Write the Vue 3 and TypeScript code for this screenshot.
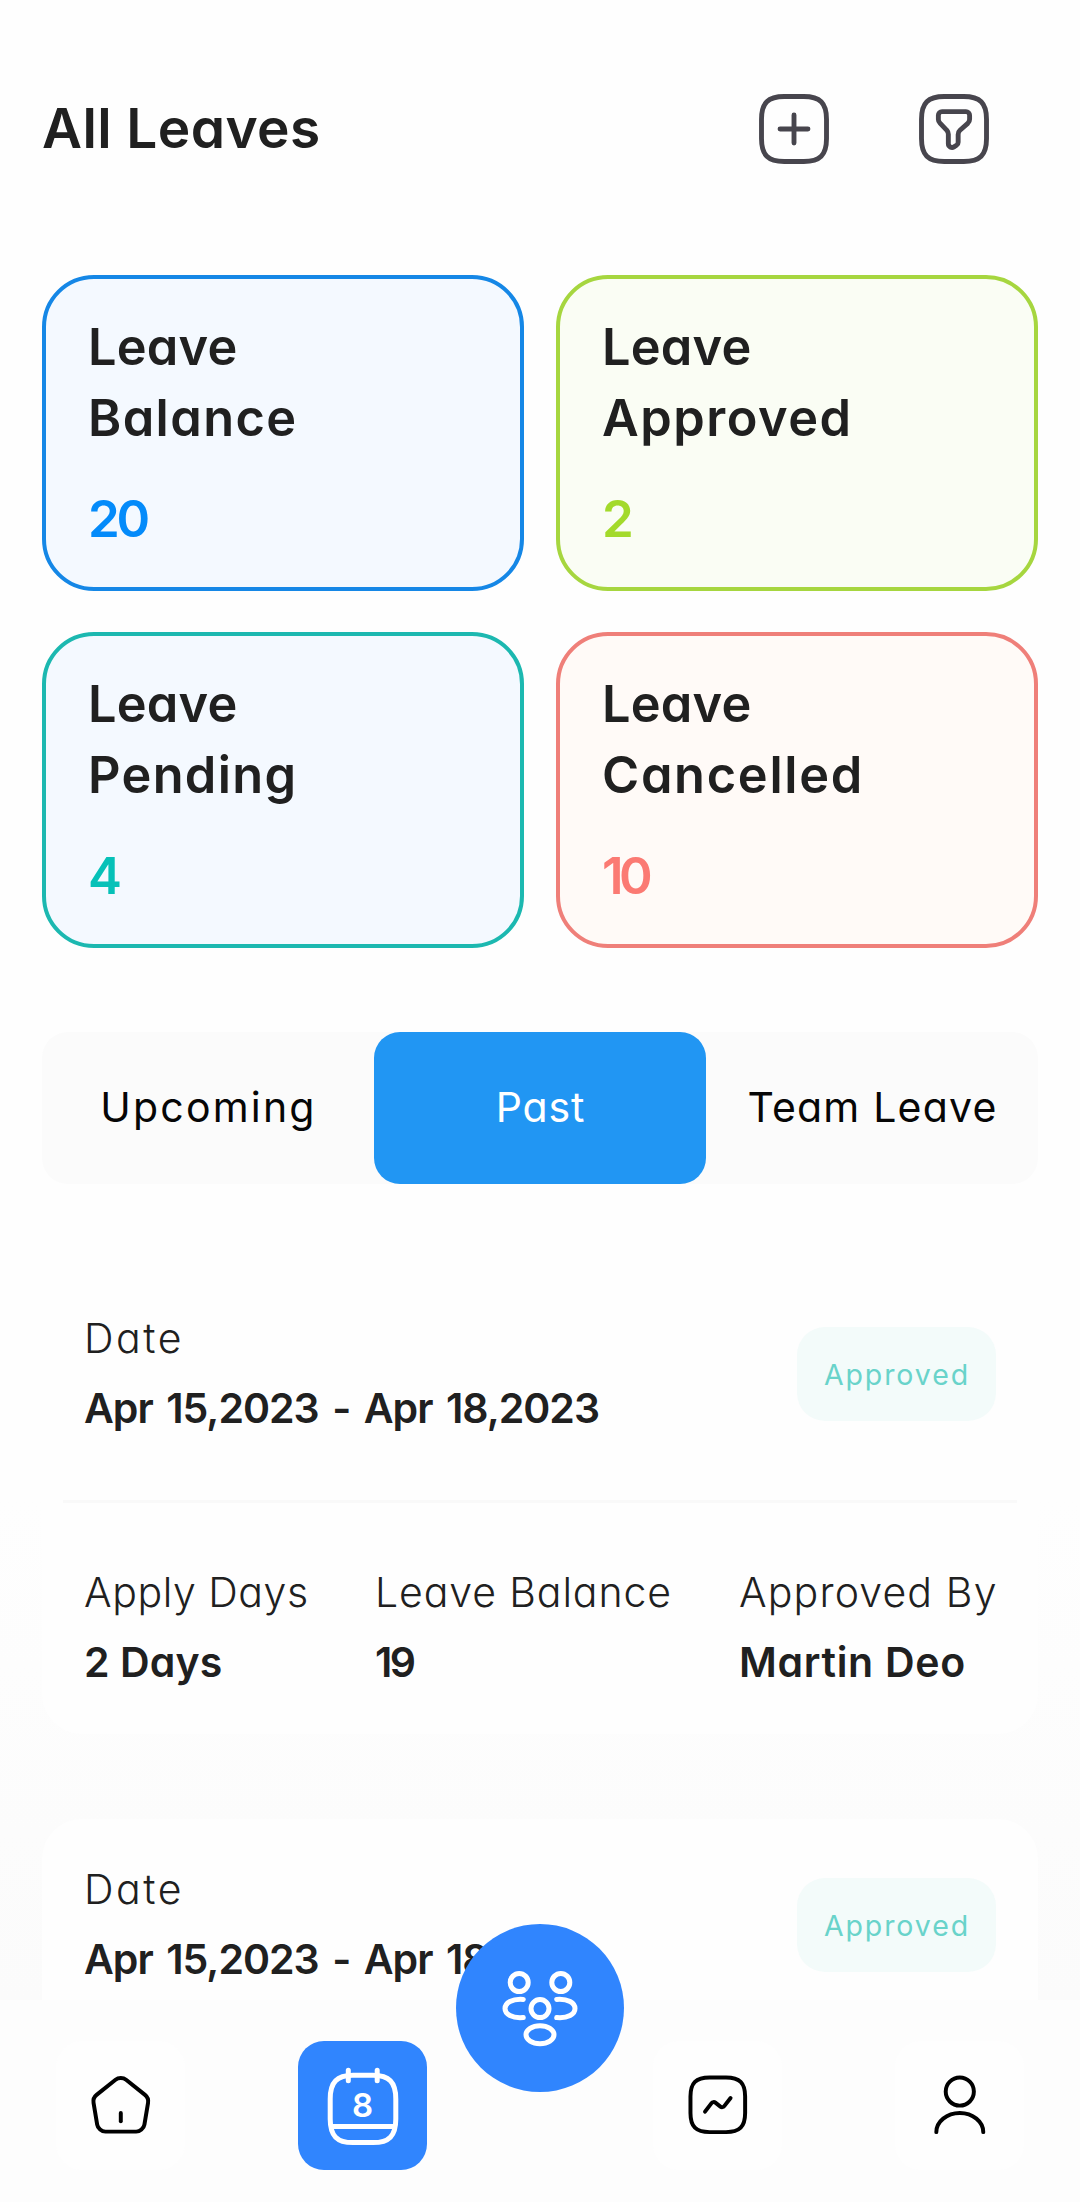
<script setup lang="ts">
interface Run { text: string; track: number }
interface Stat { tone: string; first: Run; second: Run; value: Run }
interface Fact { label: Run; value: Run }
interface Leave { id: number; range: string; status: string; facts: Fact[] }

const stats: Stat[] = [
  {
    tone: 'blue',
    first: { text: 'Leave', track: 0.2 },
    second: { text: 'Balance', track: 1.4 },
    value: { text: '20', track: -3.4 },
  },
  {
    tone: 'lime',
    first: { text: 'Leave', track: 0.2 },
    second: { text: 'Approved', track: 1.5 },
    value: { text: '2', track: 0 },
  },
  {
    tone: 'teal',
    first: { text: 'Leave', track: 0.2 },
    second: { text: 'Pending', track: 1.3 },
    value: { text: '4', track: 0 },
  },
  {
    tone: 'coral',
    first: { text: 'Leave', track: 0.2 },
    second: { text: 'Cancelled', track: 1.7 },
    value: { text: '10', track: -4.5 },
  },
]

const tabs: (Run & { active: boolean })[] = [
  { text: 'Upcoming', track: 2.2, active: false },
  { text: 'Past', track: 0.9, active: true },
  { text: 'Team Leave', track: 1.2, active: false },
]

const leaves: Leave[] = [
  {
    id: 1,
    range: 'Apr 15,2023 - Apr 18,2023',
    status: 'Approved',
    facts: [
      { label: { text: 'Apply Days', track: 0.55 }, value: { text: '2 Days', track: 0.1 } },
      { label: { text: 'Leave Balance', track: 0.9 }, value: { text: '19', track: -2.5 } },
      { label: { text: 'Approved By', track: 1.15 }, value: { text: 'Martin Deo', track: 0.7 } },
    ],
  },
  { id: 2, range: 'Apr 15,2023 - Apr 18,2023', status: 'Approved', facts: [] },
]

const spacing = (run: Run) => ({ letterSpacing: `${run.track}px` })
</script>

<template>
  <main class="screen">
    <div class="content">
      <header class="header">
        <h1>All Leaves</h1>
        <div class="actions">
          <button type="button" aria-label="Add leave">
            <svg viewBox="0 0 24 24" class="icon">
              <path d="M9 22h6c5 0 7-2 7-7V9c0-5-2-7-7-7H9C4 2 2 4 2 9v6c0 5 2 7 7 7z" />
              <path d="M7.700 12h8.600M12 16.300V7.700" />
            </svg>
          </button>
          <button type="button" aria-label="Filter">
            <svg viewBox="0 0 24 24" class="icon">
              <path d="M9 22h6c5 0 7-2 7-7V9c0-5-2-7-7-7H9C4 2 2 4 2 9v6c0 5 2 7 7 7z" />
              <path d="M8.32 6.64h7.36c.61 0 1.12.5 1.12 1.12v1.22c0 .45-.28 1-.56 1.28l-2.4 2.12c-.33.28-.56.84-.56 1.28v2.4c0 .33-.22.78-.5.95l-.79.5c-.73.45-1.73-.06-1.73-.95v-2.96c0-.39-.22-.89-.45-1.17l-2.12-2.23c-.28-.28-.5-.78-.5-1.12V7.8c0-.66.5-1.16 1.13-1.16z" />
            </svg>
          </button>
        </div>
      </header>

      <section class="stats">
        <article v-for="stat in stats" :key="stat.second.text" class="stat" :class="stat.tone">
          <h2>
            <span :style="spacing(stat.first)">{{ stat.first.text }}</span>
            <span :style="spacing(stat.second)">{{ stat.second.text }}</span>
          </h2>
          <strong :style="spacing(stat.value)">{{ stat.value.text }}</strong>
        </article>
      </section>

      <nav class="tabs">
        <button
          v-for="tab in tabs"
          :key="tab.text"
          type="button"
          :class="{ active: tab.active }"
          :style="spacing(tab)"
        >
          {{ tab.text }}
        </button>
      </nav>

      <section class="list">
        <article v-for="leave in leaves" :key="leave.id" class="leave">
          <div class="head">
            <div>
              <p class="label date">Date</p>
              <p class="value range">{{ leave.range }}</p>
            </div>
            <span class="badge">{{ leave.status }}</span>
          </div>
          <div v-if="leave.facts.length" class="facts">
            <div v-for="fact in leave.facts" :key="fact.label.text">
              <p class="label" :style="spacing(fact.label)">{{ fact.label.text }}</p>
              <p class="value" :style="spacing(fact.value)">{{ fact.value.text }}</p>
            </div>
          </div>
        </article>
      </section>
    </div>

    <nav class="bar">
      <div class="group">
        <a class="tile">
          <svg viewBox="0 0 24 24" class="glyph">
            <path d="M10.07 2.82 3.14 8.37c-.78.62-1.28 1.93-1.11 2.91l1.33 7.96c.24 1.42 1.6 2.57 3.04 2.57h11.2c1.43 0 2.8-1.16 3.04-2.57l1.33-7.96c.16-.98-.34-2.29-1.11-2.91l-6.93-5.54c-1.07-.86-2.8-.86-3.86-.01z" />
            <path d="M12 18v-3" />
          </svg>
        </a>
        <a class="tile selected">
          <svg viewBox="0 0 78 84" class="calendar">
            <path d="M29 11.3h20C65 11.3 71.8 18 71.8 35v20C71.8 72 65 78.6 49 78.6H29C13 78.6 6.2 72 6.2 55V35C6.2 18 13 11.3 29 11.3z" />
            <path d="M24.3 6.2v10.6M53.2 6.2v10.6" />
            <path d="M7.5 62.4h63" stroke-linecap="butt" />
            <text x="38.5" y="53.2" text-anchor="middle">8</text>
          </svg>
        </a>
      </div>
      <div class="group">
        <a class="tile">
          <svg viewBox="0 0 24 24" class="glyph">
            <path d="M9 22h6c5 0 7-2 7-7V9c0-5-2-7-7-7H9C4 2 2 4 2 9v6c0 5 2 7 7 7z" />
            <path d="m7.33 14.49 2.38-3.09c.34-.44.97-.52 1.41-.18l1.83 1.44c.44.34 1.07.26 1.41-.17l2.31-2.98" />
          </svg>
        </a>
        <a class="tile">
          <svg viewBox="0 0 24 24" class="glyph">
            <path d="M12 12.300a5.150 5.150 0 1 0 0-10.300 5.150 5.150 0 0 0 0 10.300z" />
            <path d="M20.59 22c0-3.87-3.85-7-8.59-7s-8.59 3.13-8.59 7" />
          </svg>
        </a>
      </div>
      <button type="button" class="fab" aria-label="Team">
        <svg viewBox="0 0 84 84">
          <circle cx="21.2" cy="16.5" r="9" />
          <circle cx="62.8" cy="16.5" r="9" />
          <circle cx="42" cy="42.6" r="9" />
          <ellipse cx="42" cy="68.8" rx="14" ry="9" />
          <path d="M25.3 33.4C14 32.500 7 37 7 42.6s7 10 18.300 9" />
          <path d="M58.700 33.4C70 32.500 77 37 77 42.6s-7 10-18.300 9" />
        </svg>
      </button>
    </nav>
  </main>
</template>

<style>
body {
  margin: 0;
}
</style>

<style scoped>
.screen {
  display: flex;
  flex-direction: column;
  width: 1080px;
  height: 2202px;
  overflow: hidden;
  color: #202020;
  font-family: Inter, 'Noto Sans', sans-serif;
  font-feature-settings: 'cv11';
}

button {
  display: flex;
  align-items: center;
  justify-content: center;
  margin: 0;
  padding: 0;
  border: 0;
  background: none;
  color: inherit;
  font: inherit;
  font-feature-settings: inherit;
}

h1,
h2,
p {
  margin: 0;
}

svg {
  display: block;
  fill: none;
  stroke: currentColor;
  stroke-linecap: round;
  stroke-linejoin: round;
}

.content {
  flex: 1;
  min-height: 0;
  overflow: hidden;
  box-sizing: border-box;
  padding: 60px 42px 0;
  background: linear-gradient(#fefefe 75%, #fbfbfb);
}

.header {
  display: flex;
  align-items: center;
  justify-content: space-between;
  height: 137px;
  padding-right: 45px;
}

h1 {
  padding-bottom: 2px;
  font-size: 55px;
  font-weight: 600;
  line-height: 70px;
  letter-spacing: 0.4px;
}

.actions {
  display: flex;
  gap: 82px;
  color: #47454d;
}

.icon {
  width: 78px;
  height: 78px;
  stroke-width: 1.5;
}

.stats {
  display: grid;
  grid-template-columns: 1fr 1fr;
  grid-auto-rows: 316px;
  gap: 41px 32px;
  margin-top: 78px;
}

.stat {
  box-sizing: border-box;
  padding: 32px 41px 0 42px;
  border: 4px solid;
  border-radius: 52px;
}

.stat h2 {
  color: #202020;
  font-size: 50.5px;
  font-weight: 600;
  line-height: 71px;
}

.stat h2 span {
  display: block;
}

.stat strong {
  display: block;
  margin-top: 36px;
  font-size: 51px;
  font-weight: 600;
  line-height: 60px;
}

.blue {
  border-color: #1587e6;
  background: #f4f9ff;
  color: #048bfa;
}

.lime {
  border-color: #a6d63f;
  background: #fafdf4;
  color: #a3da2b;
}

.teal {
  border-color: #1cb8b0;
  background: #f4f9ff;
  color: #06c1b8;
}

.coral {
  border-color: #ef7f79;
  background: #fffaf7;
  color: #fb7a73;
}

.tabs {
  display: grid;
  grid-template-columns: repeat(3, 1fr);
  height: 152px;
  margin-top: 84px;
  border-radius: 26px;
  background: #fbfbfb;
  color: #060606;
  font-size: 41px;
}

.tabs button {
  padding: 0 0 2px 1px;
  border-radius: 26px;
}

.tabs .active {
  background: #2196f3;
  color: #fff;
}

.list {
  display: flex;
  flex-direction: column;
  gap: 85px;
  margin-top: 84px;
}

.leave {
  box-sizing: border-box;
  height: 466px;
  flex: none;
  padding: 35px 21px 0;
  border-radius: 40px;
  background: #fefefe;
}

.head {
  display: flex;
  align-items: center;
  justify-content: space-between;
  padding: 0 21px 56px;
  border-bottom: 3px solid #f9f9f9;
}

.facts {
  display: grid;
  grid-template-columns: 291px 364px auto;
  padding: 54px 0 0 21px;
}

.label {
  font-size: 41px;
  font-weight: 300;
  line-height: 70px;
  white-space: nowrap;
}

.date {
  letter-spacing: 2.6px;
}

.value {
  font-size: 41px;
  font-weight: 600;
  line-height: 71px;
  white-space: nowrap;
}

.range {
  letter-spacing: -1px;
  word-spacing: 4.2px;
}

.badge {
  box-sizing: border-box;
  width: 199px;
  height: 94px;
  padding: 2px 0 0 1px;
  border-radius: 28px;
  background: #f3fbfa;
  color: #69d3ca;
  font-size: 28.5px;
  line-height: 92px;
  letter-spacing: 1.9px;
  text-align: center;
}

.bar {
  position: relative;
  display: flex;
  justify-content: space-between;
  box-sizing: border-box;
  height: 202px;
  padding: 41px 56px 0;
  background: #fdfdfd;
  color: #000;
}

.group {
  display: flex;
  gap: 113px;
}

.tile {
  display: flex;
  align-items: center;
  justify-content: center;
  width: 129px;
  height: 129px;
  border-radius: 26px;
  background: #fefefe;
}

.selected {
  background: #3085fe;
  color: #fff;
}

.glyph {
  width: 65.6px;
  height: 65.6px;
  margin-top: -2px;
  stroke-width: 1.45;
}

.calendar {
  width: 78px;
  height: 84px;
  stroke-width: 5;
}

.calendar text {
  fill: currentColor;
  stroke: none;
  font-size: 33px;
  font-weight: 600;
}

.fab {
  position: absolute;
  top: -76px;
  left: 456px;
  width: 168px;
  height: 168px;
  border-radius: 50%;
  background: #3085fe;
  color: #fff;
}

.fab svg {
  width: 84px;
  height: 84px;
  stroke-width: 5;
}
</style>
